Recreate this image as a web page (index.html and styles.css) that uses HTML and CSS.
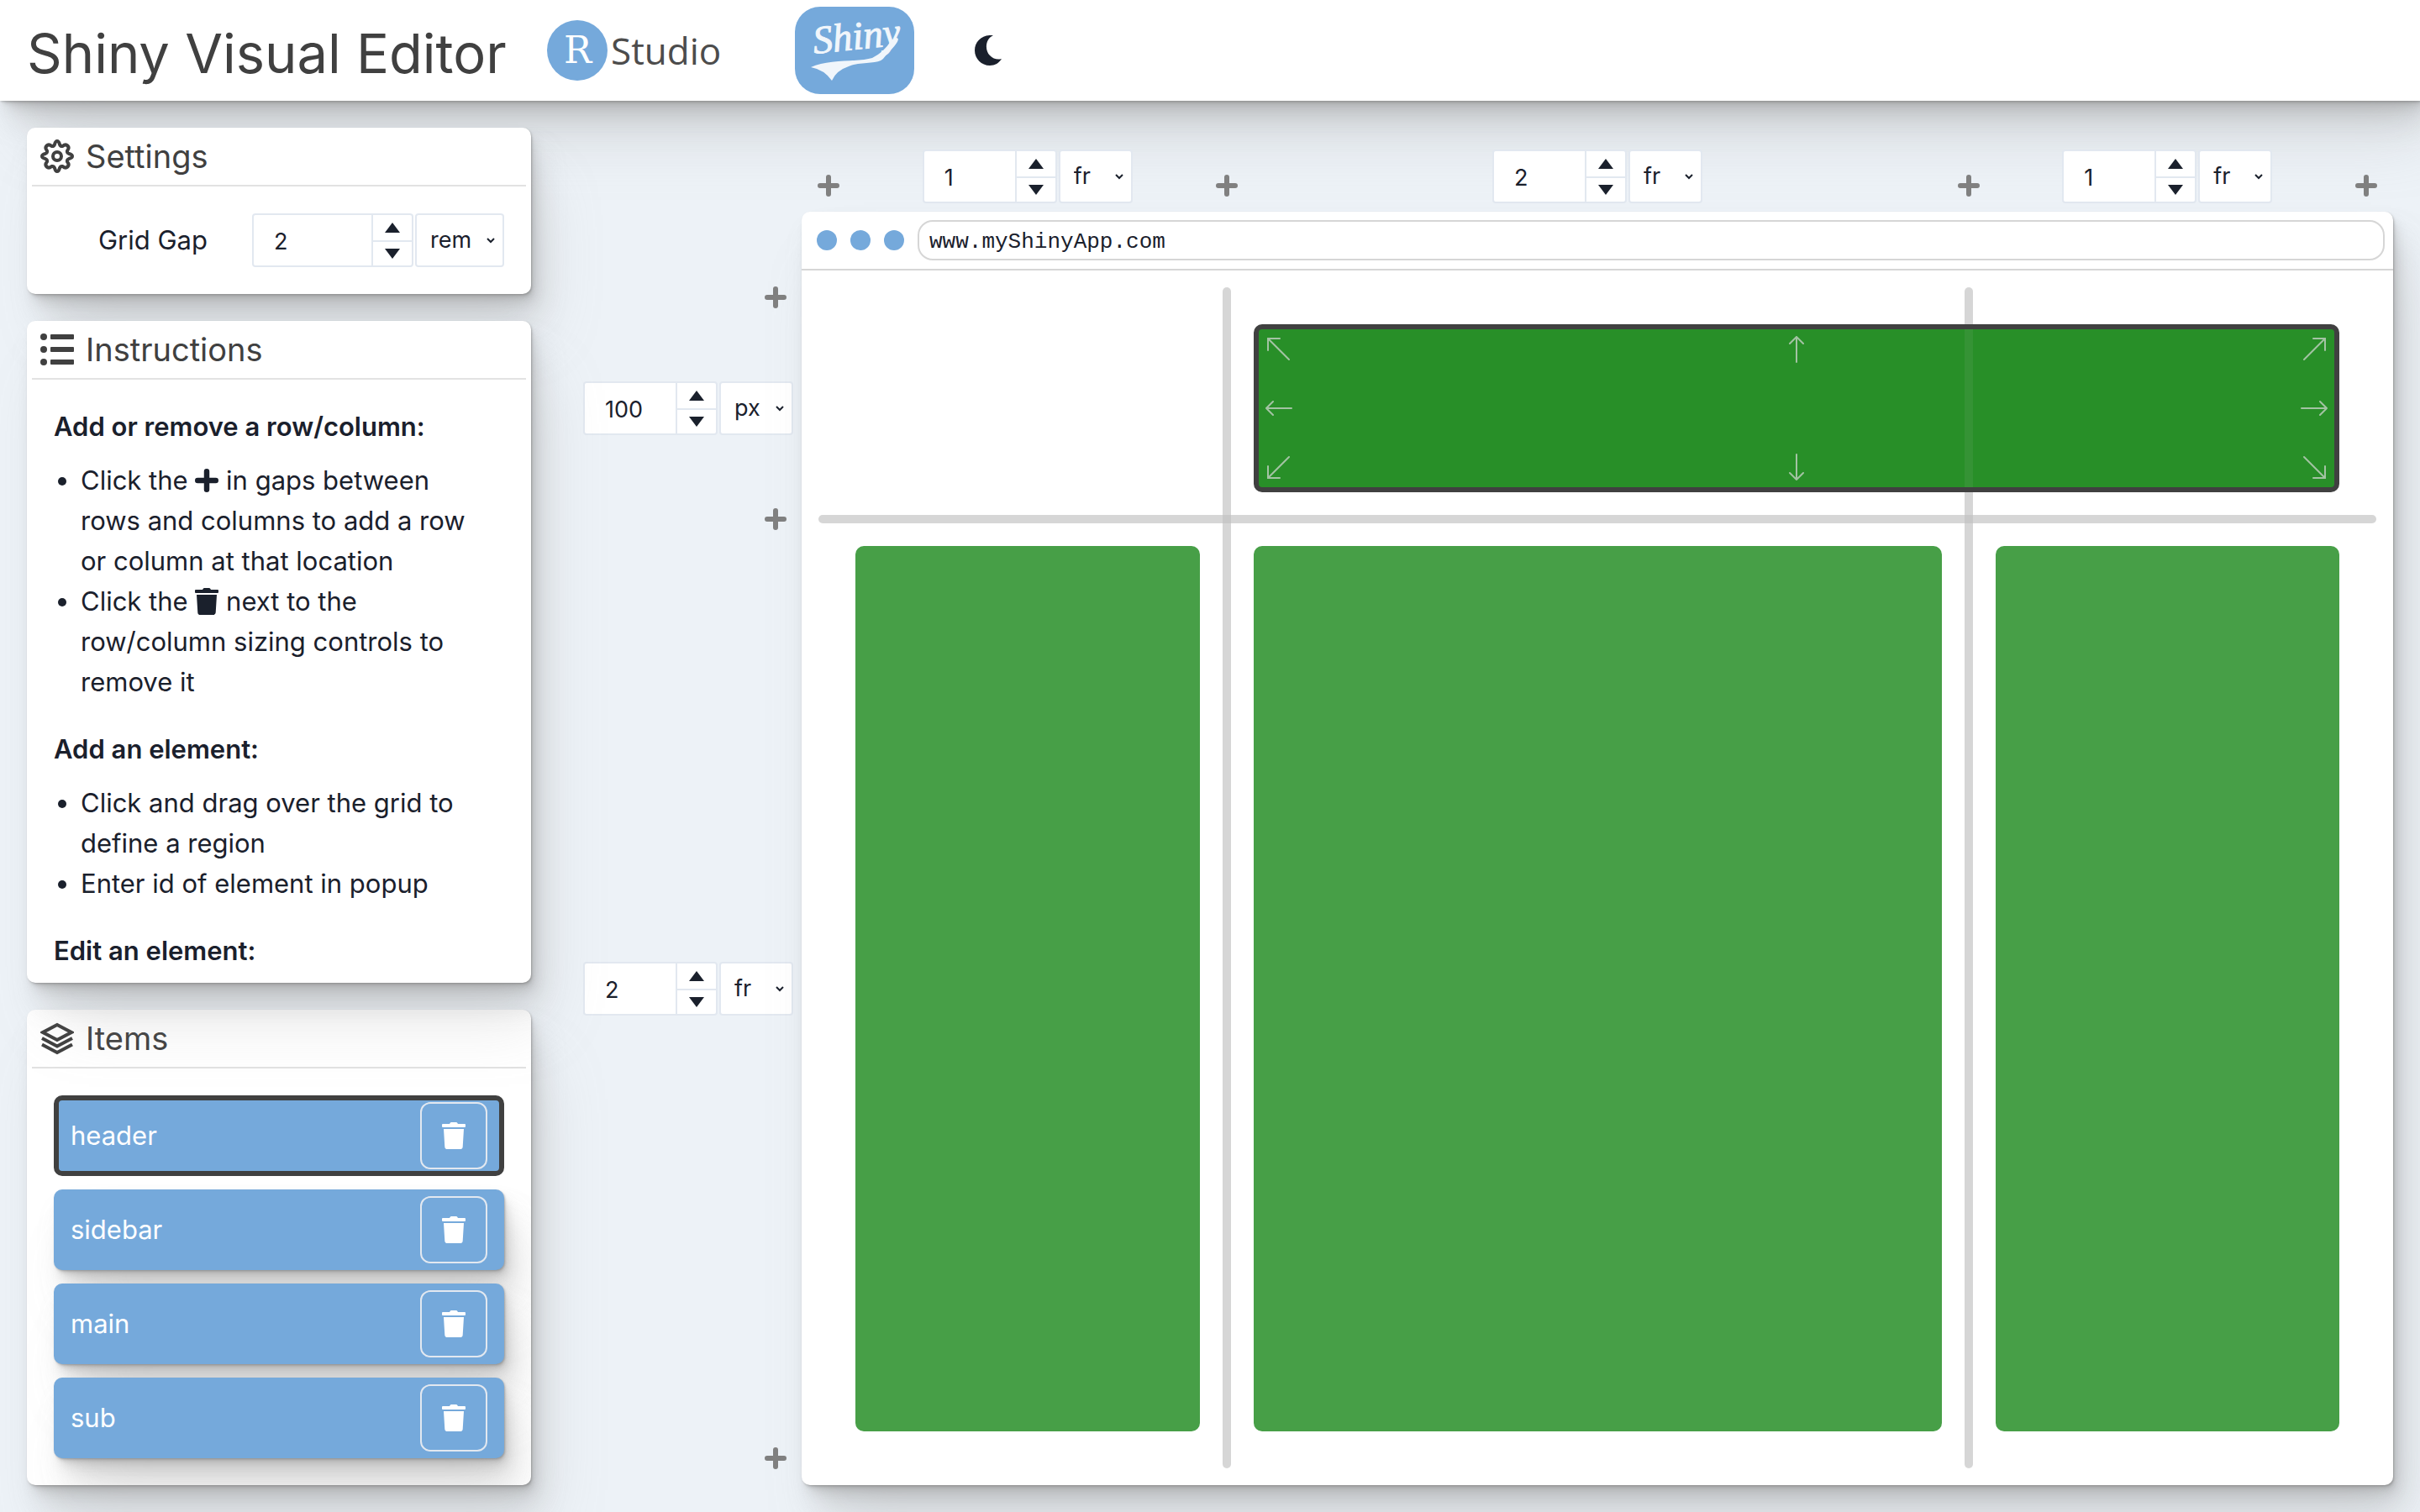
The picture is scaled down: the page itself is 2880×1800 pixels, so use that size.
FILE: index.html
```html
<!DOCTYPE html>
<html lang="en">
<head>
<meta charset="utf-8">
<meta name="viewport" content="width=device-width, initial-scale=1">
<title>Shiny Visual Editor</title>
<link rel="stylesheet" href="styles.css">
</head>
<body>
<svg class="sprite" aria-hidden="true">
  <symbol id="trash" viewBox="0 0 28 32">
    <path d="M1 2h8l.8-1.300Q10.300 0 11 0h6q.7 0 1.200.7L19 2h8q1 0 1 1v2q0 1-1 1H1q-1 0-1-1V3q0-1 1-1zM2 8h24l-1.300 21.200Q24.500 32 21.700 32H6.300q-2.800 0-3-2.800z"/>
  </symbol>
  <symbol id="plus" viewBox="0 0 26 26">
    <path d="M13 3v20M3 13h20" fill="none" stroke="currentColor" stroke-width="6" stroke-linecap="round"/>
  </symbol>
  <symbol id="up" viewBox="0 0 18 12"><path d="M9 0l9 12H0z"/></symbol>
  <symbol id="down" viewBox="0 0 18 12"><path d="M9 12l9-12H0z"/></symbol>
  <symbol id="arrow-side" viewBox="0 0 32 32">
    <path d="M31 16H1M9 8l-8 8 8 8" fill="none" stroke="currentColor" stroke-width="2" stroke-linecap="round"/>
  </symbol>
  <symbol id="arrow-corner" viewBox="0 0 32 32">
    <path d="M28 28L3 3M3 17V3H17" fill="none" stroke="currentColor" stroke-width="2" stroke-linecap="round"/>
  </symbol>
</svg>

<header class="topbar">
  <h1>Shiny Visual Editor</h1>
  <a class="rstudio" href="#" aria-label="RStudio">
    <svg width="220" height="72" viewBox="0 0 220 72">
      <circle cx="36" cy="36" r="36" fill="#75a9db"/>
      <text class="rstudio-r" x="20" y="51">R</text>
      <text class="rstudio-name" x="76" y="53">Studio</text>
    </svg>
  </a>
  <a class="shiny" href="#" aria-label="Shiny">
    <svg width="142" height="104" viewBox="0 0 142 104">
      <rect width="142" height="104" rx="30" fill="#75a9db"/>
      <text class="shiny-name" x="23" y="56" transform="rotate(-6 23 56)">Shiny</text>
      <path d="M19 72C40 62 76 66 92 61Q106 54 114 41Q122 34 123 39C121 46 112 53 105 62C98 69 78 65 64 71Q49 76 44 88Q35 75 19 72z" fill="#f1f6fb"/>
    </svg>
  </a>
  <button class="theme" type="button" aria-label="Dark mode">
    <svg width="32" height="36" viewBox="0 0 32 36"><path d="M22 0C12 5 12 18 18 24Q24 30 32 28C29 33 24 36 18 36C8 36 0 28 0 18C0 7 9-1 22 0z"/></svg>
  </button>
</header>

<main class="layout">
  <aside class="sidebar">
    <section class="card">
      <h2 class="card-title">
        <svg class="outline" width="40" height="40" viewBox="0 0 40 40" stroke-width="4" stroke-linejoin="round"><circle cx="20" cy="20" r="5"/><path d="M20 2Q22 2 23 6Q24 8.500 26.500 8Q30 5 32.500 7.500Q35 10 32 13.500Q31.500 16 34 17Q38 18 38 20Q38 22 34 23Q31.500 24 32 26.500Q35 30 32.500 32.500Q30 35 26.500 32Q24 31.500 23 34Q22 38 20 38Q18 38 17 34Q16 31.500 13.500 32Q10 35 7.500 32.500Q5 30 8 26.500Q8.500 24 6 23Q2 22 2 20Q2 18 6 17Q8.500 16 8 13.500Q5 10 7.500 7.500Q10 5 13.500 8Q16 8.500 17 6Q18 2 20 2z"/></svg>
        Settings
      </h2>
      <div class="setting">
        <label for="gap">Grid Gap</label>
        <div class="sizer sizer-wide">
          <div class="number"><input id="gap" type="text" value="2"><div class="steps"><button type="button" aria-label="Increase"><svg><use href="#up"/></svg></button><button type="button" aria-label="Decrease"><svg><use href="#down"/></svg></button></div></div>
          <select aria-label="Gap unit"><option>rem</option></select>
        </div>
      </div>
    </section>

    <section class="card instructions">
      <h2 class="card-title">
        <svg width="40" height="40" viewBox="0 0 40 40"><circle cx="4" cy="5" r="4"/><circle cx="4" cy="20" r="4"/><circle cx="4" cy="35" r="4"/><rect x="12" y="2" width="28" height="6" rx="1"/><rect x="12" y="17" width="28" height="6" rx="1"/><rect x="12" y="32" width="28" height="6" rx="1"/></svg>
        Instructions
      </h2>
      <div class="help">
        <h3>Add or remove a row/column:</h3>
        <ul>
          <li>Click the <svg class="inline-plus"><use href="#plus"/></svg> in gaps between rows and columns to add a row or column at that location</li>
          <li>Click the <svg class="inline-trash"><use href="#trash"/></svg> next to the row/column sizing controls to remove it</li>
        </ul>
        <h3>Add an element:</h3>
        <ul>
          <li>Click and drag over the grid to define a region</li>
          <li>Enter id of element in popup</li>
        </ul>
        <h3>Edit an element:</h3>
      </div>
    </section>

    <section class="card">
      <h2 class="card-title">
        <svg class="outline" width="40" height="40" viewBox="0 0 40 40" stroke-width="4"><path d="M20 4L37 13L20 22L3 13z"/><path d="M2 20L20 29.500L38 20M2 27.500L20 37L38 27.500"/></svg>
        Items
      </h2>
      <ul class="items">
        <li class="item selected"><span>header</span><button type="button" aria-label="Remove header"><svg><use href="#trash"/></svg></button></li>
        <li class="item"><span>sidebar</span><button type="button" aria-label="Remove sidebar"><svg><use href="#trash"/></svg></button></li>
        <li class="item"><span>main</span><button type="button" aria-label="Remove main"><svg><use href="#trash"/></svg></button></li>
        <li class="item"><span>sub</span><button type="button" aria-label="Remove sub"><svg><use href="#trash"/></svg></button></li>
      </ul>
    </section>
  </aside>

  <section class="editor">
    <div class="columns">
      <button class="add" type="button" aria-label="Add column"><svg><use href="#plus"/></svg></button>
      <div class="sizer">
        <div class="number"><input type="text" value="1" aria-label="Column 1 size"><div class="steps"><button type="button" aria-label="Increase"><svg><use href="#up"/></svg></button><button type="button" aria-label="Decrease"><svg><use href="#down"/></svg></button></div></div>
        <select aria-label="Column 1 unit"><option>fr</option></select>
      </div>
      <button class="add" type="button" aria-label="Add column"><svg><use href="#plus"/></svg></button>
      <div class="sizer">
        <div class="number"><input type="text" value="2" aria-label="Column 2 size"><div class="steps"><button type="button" aria-label="Increase"><svg><use href="#up"/></svg></button><button type="button" aria-label="Decrease"><svg><use href="#down"/></svg></button></div></div>
        <select aria-label="Column 2 unit"><option>fr</option></select>
      </div>
      <button class="add" type="button" aria-label="Add column"><svg><use href="#plus"/></svg></button>
      <div class="sizer">
        <div class="number"><input type="text" value="1" aria-label="Column 3 size"><div class="steps"><button type="button" aria-label="Increase"><svg><use href="#up"/></svg></button><button type="button" aria-label="Decrease"><svg><use href="#down"/></svg></button></div></div>
        <select aria-label="Column 3 unit"><option>fr</option></select>
      </div>
      <button class="add" type="button" aria-label="Add column"><svg><use href="#plus"/></svg></button>
    </div>

    <div class="rows">
      <button class="add" type="button" aria-label="Add row"><svg><use href="#plus"/></svg></button>
      <div class="sizer">
        <div class="number"><input type="text" value="100" aria-label="Row 1 size"><div class="steps"><button type="button" aria-label="Increase"><svg><use href="#up"/></svg></button><button type="button" aria-label="Decrease"><svg><use href="#down"/></svg></button></div></div>
        <select aria-label="Row 1 unit"><option>px</option></select>
      </div>
      <button class="add" type="button" aria-label="Add row"><svg><use href="#plus"/></svg></button>
      <div class="sizer">
        <div class="number"><input type="text" value="2" aria-label="Row 2 size"><div class="steps"><button type="button" aria-label="Increase"><svg><use href="#up"/></svg></button><button type="button" aria-label="Decrease"><svg><use href="#down"/></svg></button></div></div>
        <select aria-label="Row 2 unit"><option>fr</option></select>
      </div>
      <button class="add" type="button" aria-label="Add row"><svg><use href="#plus"/></svg></button>
    </div>

    <div class="browser">
      <div class="browser-bar">
        <i class="dot"></i><i class="dot"></i><i class="dot"></i>
        <input class="url" type="text" value="www.myShinyApp.com" aria-label="Address">
      </div>
      <div class="app-grid">
        <div class="line-v line-first"></div>
        <div class="line-v line-second"></div>
        <div class="line-h"></div>
        <div class="cell cell-header">
          <svg class="nw"><use href="#arrow-corner"/></svg><svg class="n"><use href="#arrow-side"/></svg><svg class="ne"><use href="#arrow-corner"/></svg>
          <svg class="w"><use href="#arrow-side"/></svg><span></span><svg class="e"><use href="#arrow-side"/></svg>
          <svg class="sw"><use href="#arrow-corner"/></svg><svg class="s"><use href="#arrow-side"/></svg><svg class="se"><use href="#arrow-corner"/></svg>
        </div>
        <div class="line-through"></div>
        <div class="cell cell-sidebar"></div>
        <div class="cell cell-main"></div>
        <div class="cell cell-sub"></div>
      </div>
    </div>
  </section>
</main>
</body>
</html>
```
FILE: styles.css
```css
:root {
  --blue: #75a9db;
  --ink: #1a202c;
  --gray: #404040;
  --edge: #e2e8f0;
  --line: #d6d6d6;
  --shadow:
    1px 1px 2px rgba(120, 120, 120, .4),
    2px 4px 5px -2px rgba(120, 120, 120, .36),
    6px 10px 14px -4px rgba(140, 140, 140, .36),
    12px 26px 34px -6px rgba(150, 150, 150, .36),
    24px 56px 72px -14px rgba(160, 160, 160, .26);
}

* { box-sizing: border-box; }

body {
  margin: 0;
  min-height: 100vh;
  display: flex;
  flex-direction: column;
  background: #edf2f7;
  color: var(--ink);
  font-family: Inter, "Liberation Sans", sans-serif;
  font-size: 31px;
  line-height: 48px;
}

h1, h2, h3, ul { margin: 0; padding: 0; font-weight: 400; }
button { padding: 0; border: 0; background: none; color: inherit; font: inherit; }
svg { display: block; fill: currentColor; }
.outline { fill: none; stroke: currentColor; }
.sprite { display: none; }

.topbar {
  height: 120px;
  padding: 0 32px;
  display: flex;
  align-items: center;
  background: #fff;
  box-shadow: var(--shadow);
}
.topbar h1 {
  width: 619px;
  padding-top: 8px;
  font-size: 65px;
  line-height: 96px;
  color: var(--gray);
  white-space: nowrap;
}
.shiny { margin-left: 75px; }
.theme { margin-left: 72px; }
.rstudio-r { font: 44px "DejaVu Serif", serif; fill: #fff; }
.rstudio-name { font: 44px "Open Sans", sans-serif; fill: #4c4c4c; }
.shiny-name { font: italic 47px "Liberation Serif", serif; fill: #f1f6fb; stroke: #f1f6fb; stroke-width: 1px; }

.layout {
  flex: 1;
  display: grid;
  grid-template-columns: 600px 1fr;
  gap: 32px;
  padding: 32px;
}

.sidebar {
  height: calc(100vh - 184px);
  display: flex;
  flex-direction: column;
  gap: 32px;
}
.card {
  background: #fff;
  border-radius: 10px;
  box-shadow: var(--shadow);
}
.card-title {
  height: 70px;
  margin: 0 6px;
  padding: 0 10px;
  display: flex;
  align-items: center;
  gap: 14px;
  border-bottom: 2px solid #e2e2e2;
  color: var(--gray);
  font-size: 38px;
}
.setting {
  padding: 32px;
  display: flex;
  align-items: center;
}
.setting label { flex: 1; text-align: center; }

.sizer { display: flex; gap: 2px; height: 64px; }
.number {
  width: 160px;
  display: flex;
  border: 2px solid var(--edge);
  border-radius: 4px;
  background: #fff;
}
.sizer-wide .number { width: 192px; }
.number input {
  flex: 1;
  min-width: 0;
  padding: 4px 0 0 24px;
  border: 0;
  background: none;
  color: inherit;
  font: inherit;
  font-size: 27px;
}
.steps {
  width: 48px;
  display: grid;
  grid-template-rows: 1fr 1fr;
  border-left: 2px solid var(--edge);
}
.steps button { display: grid; place-items: center; }
.steps button + button { border-top: 2px solid var(--edge); }
.steps svg { width: 18px; height: 12px; }
.sizer select {
  width: 88px;
  padding: 0 0 0 16px;
  appearance: none;
  border: 2px solid var(--edge);
  border-radius: 4px;
  background: #fff url("data:image/svg+xml,%3Csvg xmlns='http://www.w3.org/2000/svg' width='12' height='8'%3E%3Cpath d='M2 2l4 4 4-4' fill='none' stroke='%231a202c' stroke-width='2'/%3E%3C/svg%3E") no-repeat right 8px center;
  color: inherit;
  font: inherit;
  font-size: 27px;
}
.sizer-wide select { width: 106px; }

.instructions {
  position: relative;
  z-index: 1;
  flex: 1;
  min-height: 0;
  overflow: hidden;
}
.help { padding: 32px; }
.help h3 { font-size: 31px; line-height: 48px; font-weight: 600; }
.help ul { margin: 16px 0 32px; padding: 0 32px; }
.help svg { display: inline-block; }
.inline-plus { width: 28px; height: 28px; vertical-align: -3px; }
.inline-trash { width: 28px; height: 32px; vertical-align: -5px; }

.items {
  padding: 32px;
  display: grid;
  gap: 16px;
  list-style: none;
  overflow: hidden;
}
.item {
  height: 96px;
  padding: 0 20px;
  display: flex;
  align-items: center;
  justify-content: space-between;
  border-radius: 10px;
  background: var(--blue);
  box-shadow: var(--shadow);
  color: #fff;
}
.item.selected { padding: 0 14px; border: 6px solid var(--gray); box-shadow: none; }
.item button {
  width: 80px;
  height: 80px;
  display: grid;
  place-items: center;
  border: 2px solid #e2e8f0;
  border-radius: 12px;
}
.item svg { width: 28px; height: 32px; }

.editor {
  display: grid;
  grid-template-columns: 290px 1fr;
  grid-template-rows: 100px 1fr;
}
.add { color: #808080; }
.add svg { width: 26px; height: 26px; }
.columns {
  grid-column: 2;
  padding-bottom: 10px;
  display: grid;
  grid-template-columns: 64px 1fr 64px 2fr 64px 1fr 64px;
  align-items: end;
  justify-items: center;
}
.columns .add { padding-bottom: 8px; }
.rows {
  padding: 70px 10px 0 0;
  display: grid;
  grid-template-rows: 64px 200px 64px 1fr 64px;
  align-items: center;
  justify-items: end;
}
.rows .add { padding-right: 8px; }

.browser {
  display: flex;
  flex-direction: column;
  border-radius: 10px;
  background: #fff;
  box-shadow: var(--shadow);
}
.browser-bar {
  height: 70px;
  padding: 0 10px 0 18px;
  display: flex;
  align-items: center;
  gap: 16px;
  border-bottom: 2px solid var(--line);
}
.dot { width: 24px; height: 24px; border-radius: 50%; background: var(--blue); }
.url {
  flex: 1;
  height: 48px;
  padding: 4px 12px 0;
  border: 2px solid var(--line);
  border-radius: 18px;
  background: none;
  color: inherit;
  font: 26px "Liberation Mono", monospace;
}
.app-grid {
  flex: 1;
  display: grid;
  grid-template-columns: 64px 1fr 64px 2fr 64px 1fr 64px;
  grid-template-rows: 64px 200px 64px 1fr 64px;
}
.line-v, .line-h { border-radius: 5px; background: rgba(192, 192, 192, .65); }
.line-v { grid-row: 1 / -1; width: 10px; margin: 20px 0; justify-self: center; }
.line-first { grid-column: 3; }
.line-second { grid-column: 5; }
.line-h { grid-area: 3 / 1 / 4 / -1; height: 10px; margin: 0 20px; align-self: center; }
.line-through {
  grid-area: 2 / 5;
  width: 10px;
  margin: 6px 0;
  justify-self: center;
  background: rgba(192, 192, 192, .09);
}
.cell { border-radius: 10px; background: #479f47; }
.cell-sidebar { grid-area: 4 / 2; }
.cell-main { grid-area: 4 / 4; }
.cell-sub { grid-area: 4 / 6; }
.cell-header {
  grid-area: 2 / 4 / 3 / 7;
  padding: 8px;
  display: grid;
  grid-template-columns: 32px 1fr 32px;
  align-content: space-between;
  justify-items: center;
  border: 6px solid var(--gray);
  background: #288f28;
  color: #a3c3a3;
}
.cell-header svg { width: 32px; height: 32px; }
.n { transform: rotate(90deg); }
.s { transform: rotate(-90deg); }
.e { transform: rotate(180deg); }
.ne { transform: rotate(90deg); }
.se { transform: rotate(180deg); }
.sw { transform: rotate(-90deg); }
```
